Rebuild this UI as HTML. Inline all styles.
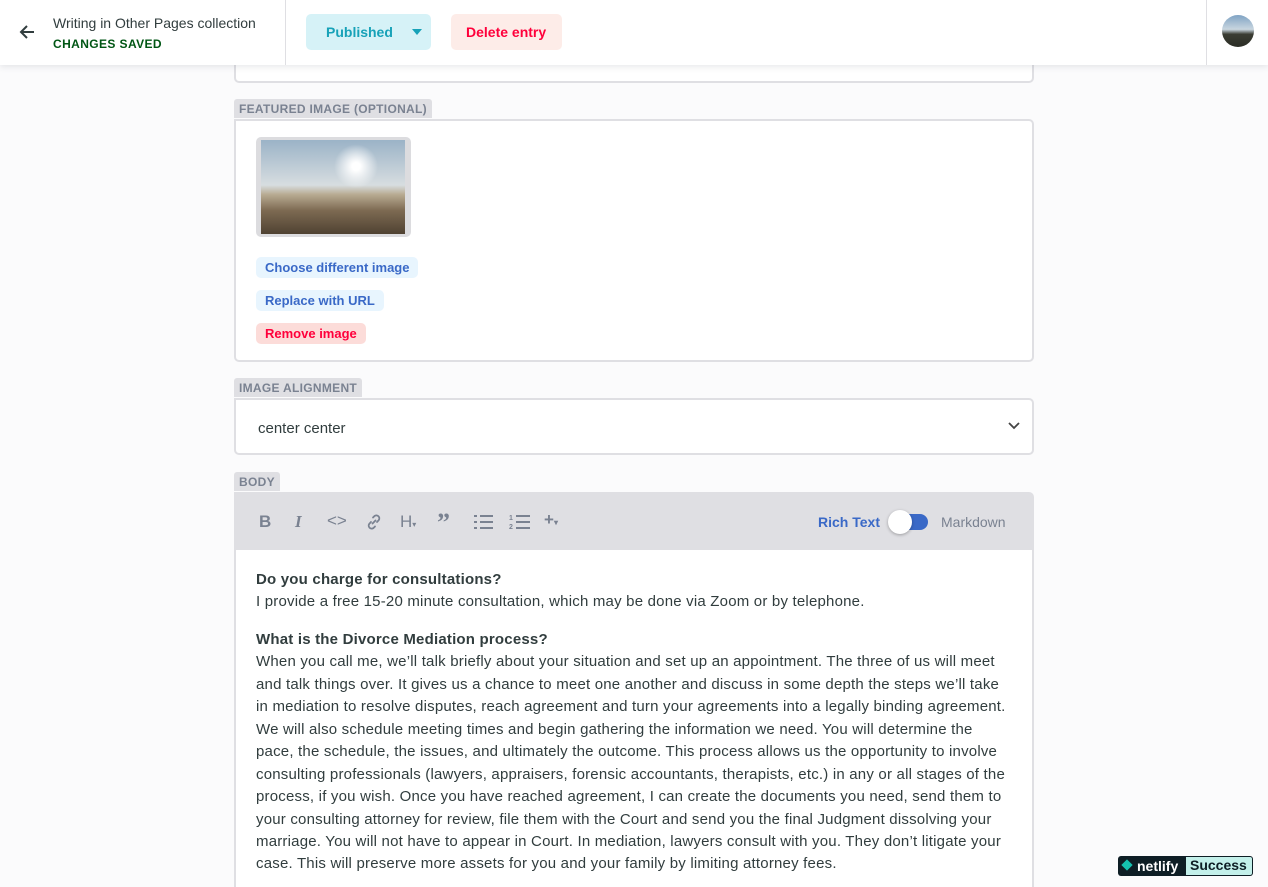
<!DOCTYPE html>
<html><head><meta charset="utf-8"><style>
*{box-sizing:border-box;margin:0;padding:0}
html,body{width:1268px;height:887px;overflow:hidden}
body{background:#fbfbfc;font-family:"Liberation Sans",sans-serif;position:relative;color:#313d3e}
.top{position:absolute;left:0;top:0;width:1268px;height:65px;background:#fff;box-shadow:0 2px 6px rgba(68,74,87,.12);z-index:5}
.field{position:absolute;left:234px;width:800px;border:2px solid #dfdfe3;border-radius:5px;background:#fff}
.lbl{position:absolute;left:234px;background:#dfdfe3;color:#7a8291;font-size:12px;font-weight:bold;padding:3px 5px 2px;border-radius:3px 3px 0 0;letter-spacing:.3px}
.btn{position:absolute;left:256px;font-size:13px;font-weight:bold;padding:3px 9px;border-radius:5px}
.p{font-size:15px;line-height:22.45px;color:#313d3e;letter-spacing:.2px}
</style></head><body>
<div class="top">
 <svg style="position:absolute;left:18px;top:24px" width="18" height="16" viewBox="0 0 18 16"><path d="M16 8H3M9 2L3 8l6 6" stroke="#313d3e" stroke-width="2" fill="none"/></svg>
 <div style="position:absolute;left:53px;top:15px;font-size:14px;color:#313d3e">Writing in Other Pages collection</div>
 <div style="position:absolute;left:53px;top:37px;font-size:12px;font-weight:bold;color:#005614;letter-spacing:.4px">CHANGES SAVED</div>
 <div style="position:absolute;left:285px;top:0;width:1px;height:65px;background:#dfdfe3"></div>
 <div style="position:absolute;left:306px;top:14px;width:125px;height:36px;background:#d6f2f7;border-radius:5px;color:#17a2b8;font-size:14px;font-weight:bold;padding:10px 0 0 20px">Published<span style="position:absolute;left:106px;top:15px;border:5px solid transparent;border-top:6px solid #17a2b8"></span></div>
 <div style="position:absolute;left:451px;top:14px;width:111px;height:36px;background:#fdece8;border-radius:5px;color:#ff003b;font-size:14px;font-weight:bold;padding:10px 0 0 15px">Delete entry</div>
 <div style="position:absolute;left:1206px;top:0;width:1px;height:65px;background:#dfdfe3"></div>
 <div style="position:absolute;left:1222px;top:15px;width:32px;height:32px;border-radius:50%;background:linear-gradient(#7fa3c4 0%,#c9d6df 45%,#3b3d33 60%,#2b2d25 100%)"></div>
</div>
<div class="field" style="top:40px;height:43px"></div>
<div class="lbl" style="top:99px">FEATURED IMAGE (OPTIONAL)</div>
<div class="field" style="top:119px;height:243px;border-top-left-radius:0">
 <div style="position:absolute;left:20px;top:16px;width:155px;height:100px;border-radius:5px;background:#dcdcdf;padding:3px 5px">
  <div style="width:144px;height:94px;background:radial-gradient(circle at 66% 28%,#fff 0,#fff 4px,rgba(255,255,255,0) 22px),linear-gradient(#9bb3c7 0%,#d7dde0 48%,#b8ab92 58%,#7d6a52 75%,#4f4232 100%)"></div>
 </div>
</div>
<div class="btn" style="top:257px;background:#e8f5fe;color:#3a69c7">Choose different image</div>
<div class="btn" style="top:290px;background:#e8f5fe;color:#3a69c7">Replace with URL</div>
<div class="btn" style="top:323px;background:#fcdcd9;color:#ff003b">Remove image</div>
<div class="lbl" style="top:378px">IMAGE ALIGNMENT</div>
<div class="field" style="top:398px;height:57px;border-top-left-radius:0">
 <div style="position:absolute;left:22px;top:20px;font-size:15px">center center</div>
 <svg style="position:absolute;right:12px;top:22px" width="12" height="8" viewBox="0 0 12 8"><path d="M1 1l5 5 5-5" stroke="#444" stroke-width="1.8" fill="none"/></svg>
</div>
<div class="lbl" style="top:472px">BODY</div>
<div class="field" style="top:492px;height:420px;border-top-left-radius:0">
 <div style="height:56px;background:#dfdfe3;position:relative;color:#7a8291;font-size:17px;font-weight:bold">
  <span style="position:absolute;left:23px;top:18px">B</span>
  <span style="position:absolute;left:59px;top:18px;font-style:italic;font-family:'Liberation Serif',serif">I</span>
  <span style="position:absolute;left:91px;top:17px;font-weight:normal">&lt;&gt;</span>
  <svg style="position:absolute;left:129px;top:19px" width="18" height="18" viewBox="0 0 18 18"><path d="M7.5 10.5l3-3M8 4.5l1.5-1.5a3 3 0 014.2 4.2L12 9M10 13.5L8.5 15a3 3 0 01-4.2-4.2L6 9" stroke="#7a8291" stroke-width="1.8" fill="none" stroke-linecap="round"/></svg>
  <span style="position:absolute;left:164px;top:18px;font-weight:normal">H<small style="font-size:8px">▾</small></span>
  <span style="position:absolute;left:201px;top:14px;font-size:26px;font-family:'Liberation Serif',serif">”</span>
  <svg style="position:absolute;left:238px;top:21px" width="20" height="14" viewBox="0 0 20 14"><path d="M0 1h3M0 7h3M0 13h3M6 1h13M6 7h13M6 13h13" stroke="#7a8291" stroke-width="2"/></svg>
  <svg style="position:absolute;left:273px;top:19px" width="22" height="17" viewBox="0 0 22 17"><text x="0" y="7" font-size="7" fill="#7a8291" font-family="Liberation Sans">1</text><text x="0" y="16" font-size="7" fill="#7a8291" font-family="Liberation Sans">2</text><path d="M7 3h14M7 9h14M7 15h14" stroke="#7a8291" stroke-width="2"/></svg>
  <span style="position:absolute;left:308px;top:16px">+<small style="font-size:8px">▾</small></span>
  <span style="position:absolute;left:582px;top:20px;font-size:14px;color:#3a69c7">Rich Text</span>
  <span style="position:absolute;left:656px;top:20px;width:36px;height:16px;border-radius:8px;background:#3a69c7"></span>
  <span style="position:absolute;left:652px;top:16px;width:24px;height:24px;border-radius:50%;background:#fff;box-shadow:0 1px 3px rgba(0,0,0,.3)"></span>
  <span style="position:absolute;left:705px;top:20px;font-size:14px;font-weight:normal">Markdown</span>
 </div>
 <div style="padding:19px 24px 0 20px">
  <div class="p"><b>Do you charge for consultations?</b><br>I provide a free 15-20 minute consultation, which may be done via Zoom or by telephone.</div>
  <div class="p" style="margin-top:15px"><b>What is the Divorce Mediation process?</b><br>When you call me, we’ll talk briefly about your situation and set up an appointment. The three of us will meet and talk things over. It gives us a chance to meet one another and discuss in some depth the steps we’ll take in mediation to resolve disputes, reach agreement and turn your agreements into a legally binding agreement. We will also schedule meeting times and begin gathering the information we need. You will determine the pace, the schedule, the issues, and ultimately the outcome. This process allows us the opportunity to involve consulting professionals (lawyers, appraisers, forensic accountants, therapists, etc.) in any or all stages of the process, if you wish. Once you have reached agreement, I can create the documents you need, send them to your consulting attorney for review, file them with the Court and send you the final Judgment dissolving your marriage. You will not have to appear in Court. In mediation, lawyers consult with you. They don’t litigate your case. This will preserve more assets for you and your family by limiting attorney fees.</div>
 </div>
</div>
<div style="position:absolute;left:1118px;top:856px;width:135px;height:20px;border-radius:3px;background:#0e1e25;font-size:14px;font-weight:bold;color:#fff;overflow:hidden">
 <span style="position:absolute;left:5px;top:5px;width:8px;height:8px;background:#15c2b0;transform:rotate(45deg)"></span>
 <span style="position:absolute;left:19px;top:2px">netlify</span>
 <span style="position:absolute;left:68px;top:1px;right:1px;bottom:1px;background:#c3f0ea;color:#0e1e25;padding-left:4px;border-radius:0 2px 2px 0">Success</span>
</div>
</body></html>
